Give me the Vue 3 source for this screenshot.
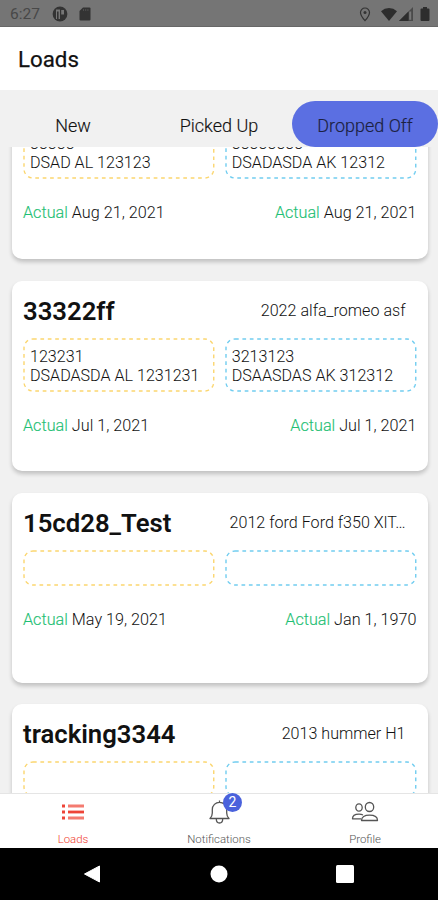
<script setup>
import { ref } from 'vue'

const tabs = ['New', 'Picked Up', 'Dropped Off']
const activeTab = ref('Dropped Off')

const loads = [
    {
        id: 1, name: '', vehicle: '',
        pickup: ['33333', 'DSAD AL 123123'], delivery: ['33333333', 'DSADASDA AK 12312'],
        pickupDate: 'Aug 21, 2021', deliveryDate: 'Aug 21, 2021'
    },
    {
        id: 2, name: '33322ff', vehicle: '2022 alfa_romeo asf',
        pickup: ['123231', 'DSADASDA AL 1231231'], delivery: ['3213123', 'DSAASDAS AK 312312'],
        pickupDate: 'Jul 1, 2021', deliveryDate: 'Jul 1, 2021'
    },
    {
        id: 3, name: '15cd28_Test', vehicle: '2012 ford Ford f350 XlT…',
        pickup: [], delivery: [],
        pickupDate: 'May 19, 2021', deliveryDate: 'Jan 1, 1970'
    },
    {
        id: 4, name: 'tracking3344', vehicle: '2013 hummer H1',
        pickup: [], delivery: [],
        pickupDate: '', deliveryDate: ''
    }
]
</script>

<template>
    <div class="screen">
        <div class="status_bar">
            <span class="time">6:27</span>
            <svg class="app_icon" width="16" height="16" viewBox="0 0 16 16">
                <circle cx="8" cy="8" r="7.4" fill="#333" />
                <path d="M4 3.500h4v9.500H4zM9.200 4H12v4.500H9.200z" fill="#777" />
                <path d="M5.800 5.500v7.500" stroke="#333" stroke-width="1.600" />
            </svg>
            <svg class="sd_icon" width="12" height="14" viewBox="0 0 12 14">
                <path d="M4 .5h6.500q1 0 1 1v11q0 1-1 1h-9q-1 0-1-1V4z" fill="#333" />
                <path d="M4.500 2v2M6.700 2v2M8.900 2v2" stroke="#555" stroke-width=".8" />
            </svg>
            <div class="space"></div>
            <svg class="pin_icon" width="12" height="15" viewBox="0 0 12 15">
                <path d="M6 1a4.500 4.500 0 0 0-4.500 4.500C1.500 8.700 6 13.700 6 13.700s4.500-5 4.500-8.200A4.500 4.500 0 0 0 6 1z" fill="none" stroke="#333" stroke-width="1.200" />
                <circle cx="6" cy="5.500" r="1.500" fill="#333" />
            </svg>
            <svg class="wifi_icon" width="16" height="13" viewBox="0 0 16 13">
                <path d="M8 13L0 3.200Q3.500 0 8 0t8 3.200z" fill="#2d2d2d" />
            </svg>
            <svg class="signal_icon" width="14" height="14" viewBox="0 0 14 14">
                <path d="M14 0v14H0z" fill="#4a4a4a" />
                <path d="M9.500 4.500V14H0z" fill="#2d2d2d" />
                <path d="M11.200 4.500v8.300" fill="none" stroke="#777" stroke-width="2" />
            </svg>
            <svg class="battery_icon" width="10" height="14" viewBox="0 0 10 14">
                <path d="M3 0h4v1.500h1.500q1 0 1 1v10.500q0 1-1 1h-7q-1 0-1-1V2.500q0-1 1-1H3z" fill="#2d2d2d" />
            </svg>
        </div>

        <div class="header">Loads</div>

        <div class="tabs">
            <div v-for="tab in tabs" :key="tab" class="tab" :class="{ active: tab === activeTab }" @click="activeTab = tab">{{ tab }}</div>
        </div>

        <div class="list">
            <div v-for="load in loads" :key="load.id" class="card">
                <div class="card_head">
                    <div class="load_name">{{ load.name }}</div>
                    <div class="vehicle">{{ load.vehicle }}</div>
                </div>
                <div class="places">
                    <div class="place pickup">
                        <svg class="outline"><rect x="1" y="1" rx="9" /></svg>
                        <div v-for="line in load.pickup" :key="line">{{ line }}</div>
                    </div>
                    <div class="place delivery">
                        <svg class="outline"><rect x="1" y="1" rx="9" /></svg>
                        <div v-for="line in load.delivery" :key="line">{{ line }}</div>
                    </div>
                </div>
                <div v-if="load.pickupDate" class="dates">
                    <div><span class="actual">Actual</span> {{ load.pickupDate }}</div>
                    <div><span class="actual">Actual</span> {{ load.deliveryDate }}</div>
                </div>
            </div>
        </div>

        <div class="bottom_nav">
            <div class="nav_item selected">
                <svg width="24" height="26" viewBox="0 0 24 26">
                    <path d="M1 6h3M1 12h3M1 18h3" stroke="#ee4438" stroke-width="3" />
                    <path d="M7 6h16M7 18h16" stroke="#f47b70" stroke-width="3" />
                    <path d="M7 12h16" stroke="#ee4438" stroke-width="2.800" />
                </svg>
                <span>Loads</span>
            </div>
            <div class="nav_item">
                <div class="bell">
                    <svg width="24" height="26" viewBox="0 0 24 26">
                        <path d="M12.500 2V.5M3 18.500q2.300-2.200 2.300-5.500v-3.500a7.200 7.200 0 0 1 14.400 0V13q0 3.300 2.300 5.500zM9.300 19q0 4 3.200 4t3.200-4" fill="none" stroke="#555" stroke-width="1.300" stroke-linejoin="round" />
                    </svg>
                    <div class="badge">2</div>
                </div>
                <span>Notifications</span>
            </div>
            <div class="nav_item">
                <svg width="28" height="26" viewBox="0 0 28 26">
                    <g fill="none" stroke="#555" stroke-width="1.300" stroke-linejoin="round">
                        <ellipse cx="18.500" cy="7" rx="4.200" ry="4.500" />
                        <ellipse cx="8" cy="7.500" rx="3.200" ry="3.700" />
                        <path d="M10.500 20.500c0-3.600 3-5.300 8-5.300s8 1.700 8 5.300zM10 18.800H1.500c0-3 2-4.600 6.500-4.600q2.500 0 4 .8" />
                    </g>
                </svg>
                <span>Profile</span>
            </div>
        </div>

        <div class="system_nav">
            <svg width="18" height="18" viewBox="0 0 18 18"><path d="M1.500 9L16.500 1v16z" fill="#fff" stroke="#fff" stroke-linejoin="round" /></svg>
            <svg width="18" height="18" viewBox="0 0 18 18"><circle cx="9" cy="9" r="8.500" fill="#fff" /></svg>
            <svg width="18" height="18" viewBox="0 0 18 18"><rect width="18" height="18" rx="1.500" fill="#fff" /></svg>
        </div>
    </div>
</template>

<style>
body {
    margin: 0;
    overflow: hidden;
}
</style>

<style scoped>
.screen {
    width: 438px;
    height: 900px;
    display: flex;
    flex-direction: column;
    overflow: hidden;
    background-color: #f1f1f1;
    font-family: Roboto, "Liberation Sans", sans-serif;
    font-weight: 300;
    color: #111;
}
.status_bar {
    flex: 0 0 27px;
    box-sizing: border-box;
    display: flex;
    align-items: center;
    padding: 2px 8px 0 10px;
    background-color: #757575;
    border-bottom: 1px solid #676767;
}
.time {
    width: 42px;
    font-size: 15.5px;
    font-weight: 400;
    color: #484848;
}
.sd_icon {
    margin-left: 11px;
}
.space {
    flex: 1;
}
.wifi_icon {
    margin-left: 10px;
}
.signal_icon {
    margin-left: 2px;
}
.battery_icon {
    margin-left: 7px;
}
.header {
    flex: 0 0 63px;
    box-sizing: border-box;
    padding: 2px 18px 0;
    background-color: #fff;
    color: #111;
    font-size: 22.3px;
    font-weight: 400;
    -webkit-text-stroke: .25px #111;
    line-height: 61px;
}
.tabs {
    flex: 0 0 57px;
    box-sizing: border-box;
    display: flex;
    padding-top: 11px;
    position: relative;
    z-index: 1;
}
.tab {
    flex: 1;
    height: 46px;
    border-radius: 23px;
    line-height: 49px;
    text-align: center;
    font-size: 18px;
    font-weight: 300;
    -webkit-text-stroke: .15px currentColor;
    color: #111;
}
.tab.active {
    background-color: #5b6fe2;
    color: #1c2140;
}
.list {
    flex: 1;
    min-height: 0;
    display: flex;
    flex-direction: column;
    gap: 21.7px;
    padding: 0 10.5px 0 12px;
    overflow: hidden;
}
.card {
    flex: 0 0 190px;
    box-sizing: border-box;
    padding: 12px 11px 0;
    border-radius: 10px;
    background-color: #fff;
    box-shadow: 0 3px 4px rgba(0, 0, 0, .2);
}
.card:first-child {
    flex-basis: 191.5px;
    margin-top: -79.2px;
}
.card_head {
    height: 44.9px;
    display: flex;
    justify-content: space-between;
    padding-right: 11px;
}
.load_name {
    color: #111;
    font-size: 25.7px;
    font-weight: 600;
    line-height: 36px;
}
.vehicle {
    font-size: 16.1px;
    line-height: 36px;
    white-space: nowrap;
}
.places {
    display: flex;
    gap: 10px;
}
.place {
    flex: 1;
    min-width: 0;
    box-sizing: border-box;
    min-height: 36px;
    padding: 9px 7px 7px;
    position: relative;
    font-size: 16.1px;
    line-height: 19px;
    white-space: nowrap;
}
.outline {
    position: absolute;
    left: 0;
    top: 0;
    width: 100%;
    height: 100%;
}
.outline rect {
    width: calc(100% - 2px);
    height: calc(100% - 2px);
    fill: none;
    stroke-width: 1.4;
    stroke-dasharray: 3.7 3.7;
}
.pickup rect {
    stroke: #fbd66f;
}
.delivery rect {
    stroke: #71cdf0;
}
.dates {
    display: flex;
    justify-content: space-between;
    margin-top: 24px;
    font-size: 16.2px;
    line-height: 19px;
}
.actual {
    color: #1fc074;
    -webkit-text-stroke: .15px #1fc074;
}
.bottom_nav {
    flex: 0 0 55px;
    box-sizing: border-box;
    display: flex;
    padding-top: 6px;
    background-color: #fff;
    border-top: 1px solid #e5e5e5;
    position: relative;
    z-index: 1;
}
.nav_item {
    flex: 1;
    display: flex;
    flex-direction: column;
    align-items: center;
    font-size: 11.4px;
    line-height: 13px;
    color: #555;
}
.nav_item span {
    margin-top: 7px;
}
.nav_item svg {
    display: block;
}
.nav_item.selected {
    color: #f03c2e;
}
.bell {
    position: relative;
}
.badge {
    position: absolute;
    left: 16px;
    top: -7px;
    width: 19px;
    height: 19px;
    border-radius: 50%;
    background-color: #4a62dc;
    color: #fff;
    font-size: 14px;
    font-weight: 400;
    line-height: 19px;
    text-align: center;
}
.system_nav {
    flex: 0 0 52px;
    display: flex;
    align-items: center;
    justify-content: space-between;
    box-sizing: border-box;
    padding: 0 84px 0 83px;
    background-color: #000;
}
</style>
